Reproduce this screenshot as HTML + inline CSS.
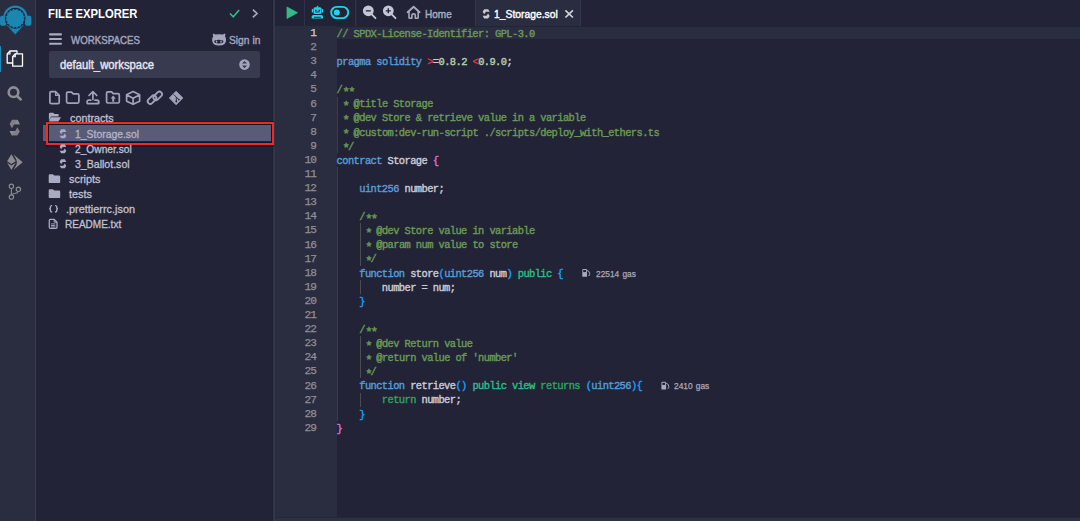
<!DOCTYPE html>
<html><head><meta charset="utf-8">
<style>
*{box-sizing:border-box;margin:0;padding:0}
html,body{width:1080px;height:521px;overflow:hidden;background:#222336;font-family:"Liberation Sans",sans-serif;position:relative}
.abs{position:absolute}
svg{position:absolute;overflow:visible}
.t{position:absolute;white-space:pre;line-height:1;transform-origin:0 0}
.ln{position:absolute;left:275px;width:40.9px;text-align:right;font-family:"Liberation Mono",monospace;font-size:11.2px;letter-spacing:-1.037px;line-height:14.1px;height:14.1px;padding-top:0px;-webkit-text-stroke:0.25px currentColor}
.cl{position:absolute;left:336.6px;font-family:"Liberation Mono",monospace;font-size:10.4px;letter-spacing:-0.578px;color:#c9cad6;line-height:14.1px;height:14.1px;white-space:pre;padding-top:0.9px;-webkit-text-stroke:0.4px currentColor}
.cm{color:#6a9955}
.ast{position:relative;top:2.8px;font-size:13px;letter-spacing:-2.117px}
.kw{color:#569cd6}
.nm{color:#b5cea8}
.rd{color:#dc3a3c}
.ok{color:#32ba89}
.gr{color:#26a562}
.pk{color:#da70d6}
.bl{color:#179fff}
.tree{position:absolute;font-size:11px;color:#c0c1d2;white-space:pre;line-height:1;transform-origin:0 0;-webkit-text-stroke:0.3px currentColor}
</style></head>
<body>
<!-- panels -->
<div class="abs" style="left:0;top:0;width:35px;height:521px;background:#2a2c3f"></div>
<div class="abs" style="left:35px;top:0;width:1px;height:521px;background:#3a3c50"></div>
<div class="abs" style="left:36px;top:0;width:237px;height:521px;background:#222336"></div>
<div class="abs" style="left:272px;top:0;width:1px;height:521px;background:#1f2032"></div>
<div class="abs" style="left:273px;top:0;width:2px;height:521px;background:#33354a"></div>
<div class="abs" style="left:275px;top:0;width:805px;height:26px;background:#222336"></div>
<div class="abs" style="left:275px;top:26px;width:62px;height:491px;background:#2a2c3f"></div>
<div class="abs" style="left:275px;top:517px;width:805px;height:1px;background:#25263a"></div>
<div class="abs" style="left:275px;top:518px;width:805px;height:3px;background:#2e3044"></div>
<!-- line highlight -->
<div class="abs" style="left:337px;top:27.2px;width:743px;height:11.6px;background:#2a2c3f"></div>

<!-- icon panel -->
<svg style="left:0;top:0" width="35" height="40" viewBox="0 0 35 40">
  <path d="M4.5 17.5 A10.9 10.9 0 0 1 26.3 17.5" fill="none" stroke="#1b86b2" stroke-width="2.4"/>
  <rect x="0" y="15.8" width="6.4" height="10" rx="2" fill="#1b86b2"/>
  <rect x="25" y="15.8" width="6.4" height="10" rx="2" fill="#1b86b2"/>
  <path d="M6.6 25 L23.8 25 L15.2 34.5 Z" fill="#1b86b2"/>
  <circle cx="15.2" cy="18.4" r="9.9" fill="#1c3556" stroke="#151a2e" stroke-width="0.8"/>
  <circle cx="15.2" cy="18.4" r="8.6" fill="#1b86b2"/>
  <g fill="#1b86b2"><circle cx="23.73" cy="20.10" r="0.95"/><circle cx="22.43" cy="23.23" r="0.95"/><circle cx="20.03" cy="25.63" r="0.95"/><circle cx="16.90" cy="26.93" r="0.95"/><circle cx="13.50" cy="26.93" r="0.95"/><circle cx="10.37" cy="25.63" r="0.95"/><circle cx="7.97" cy="23.23" r="0.95"/><circle cx="6.67" cy="20.10" r="0.95"/><circle cx="6.67" cy="16.70" r="0.95"/><circle cx="7.97" cy="13.57" r="0.95"/><circle cx="10.37" cy="11.17" r="0.95"/><circle cx="13.50" cy="9.87" r="0.95"/><circle cx="16.90" cy="9.87" r="0.95"/><circle cx="20.03" cy="11.17" r="0.95"/><circle cx="22.43" cy="13.57" r="0.95"/><circle cx="23.73" cy="16.70" r="0.95"/></g>
</svg>
<div class="abs" style="left:0;top:45.5px;width:1.3px;height:26px;background:#1b8cb8"></div>
<svg style="left:0;top:44px" width="35" height="30" viewBox="0 0 35 30">
  <path d="M10 7 L17 7 L17 19 L7.2 19 L7.2 10 Z" fill="none" stroke="#fff" stroke-width="1.3" stroke-linejoin="round"/>
  <path d="M10 7 L10 10 L7.2 10" fill="none" stroke="#fff" stroke-width="1.1"/>
  <path d="M15.3 9.8 L22.5 9.8 L22.5 22.2 L12.7 22.2 L12.7 12.8 Z" fill="#2a2c3f" stroke="#fff" stroke-width="1.3" stroke-linejoin="round"/>
  <path d="M15.3 9.8 L15.3 12.8 L12.7 12.8" fill="none" stroke="#fff" stroke-width="1.1"/>
</svg>
<svg style="left:0;top:80px" width="35" height="30" viewBox="0 0 35 30">
  <circle cx="13.5" cy="12.2" r="4.8" fill="none" stroke="#8d8e92" stroke-width="2.6"/>
  <path d="M17.5 16.5 L20.8 19.5" stroke="#8d8e92" stroke-width="2.5" stroke-linecap="round"/>
</svg>
<svg style="left:0;top:112px" width="35" height="30" viewBox="0 0 35 30">
  <path d="M12 7.8 L17.5 7.8 L19.8 12.3 L14.2 12.3 L12 16.2 L9.6 12 Z" fill="#7e7f87"/>
  <path d="M17.4 23.4 L11.9 23.4 L9.6 19.1 L15.2 19.1 L17.4 15.2 L19.8 19.4 Z" fill="#7e7f87"/>
  <path d="M14.2 12.3 L19.8 12.3 L17.5 7.8 Z" fill="#8b8c92"/>
  <path d="M11.9 23.4 L9.6 19.1 L15.2 19.1 Z" fill="#8b8c92"/>
</svg>
<svg style="left:0;top:148px" width="35" height="28" viewBox="0 0 35 28">
  <path d="M11.4 6.2 L15.7 13.2 L11.4 15.9 L7.1 13.2 Z" fill="#8a8c90"/>
  <path d="M7.1 14.8 L11.4 17.4 L15.7 14.8 L11.4 22 Z" fill="#8a8c90"/>
  <path d="M13.6 6.5 L22.7 14.3 L13.6 21.8 L16.4 17 Q17.5 14 16.2 11.2 Z" fill="#8a8c90"/>
</svg>
<svg style="left:0;top:178px" width="35" height="28" viewBox="0 0 35 28" fill="none" stroke="#8a8c90" stroke-width="1.15">
  <circle cx="11.4" cy="8.3" r="2.2"/>
  <circle cx="11.4" cy="19.1" r="2.2"/>
  <circle cx="18.4" cy="11.3" r="2.2"/>
  <path d="M11.4 10.5 L11.4 16.9 M18.2 13.5 Q17.5 15.3 14.5 15.5 L12 16.2"/>
</svg>

<!-- side panel header -->
<div class="t" style="left:48px;top:6.5px;font-size:13px;font-weight:bold;color:#ffffff;transform:scaleX(0.866)">FILE EXPLORER</div>
<svg style="left:0;top:0" width="273" height="30">
  <path d="M230 13.5 L233.3 16.8 L239.2 10" fill="none" stroke="#2fbf85" stroke-width="1.6"/>
  <path d="M252.9 9.6 L257 13.5 L252.9 17.4" fill="none" stroke="#a7a8bb" stroke-width="1.7"/>
</svg>
<svg style="left:0;top:0" width="273" height="50">
  <rect x="49" y="33.3" width="13" height="2.1" rx="1" fill="#a9aac4"/>
  <rect x="49" y="38" width="13" height="2.1" rx="1" fill="#a9aac4"/>
  <rect x="49" y="42.7" width="13" height="2.1" rx="1" fill="#a9aac4"/>
</svg>
<div class="t" style="left:71px;top:34.5px;font-size:10.8px;color:#a2a3bd;transform:scaleX(0.9);-webkit-text-stroke:0.45px currentColor">WORKSPACES</div>
<svg style="left:0;top:0" width="273" height="50">
  <path d="M213.2 36.2 Q212.3 34.3 213.3 33.5 L215.3 34.6 Q219.1 33.9 222.9 34.6 L224.9 33.5 Q225.9 34.3 225 36.2 Q226.1 38 226.1 40 Q226.1 45.5 219.1 45.5 Q212.1 45.5 212.1 40 Q212.1 38 213.2 36.2 Z" fill="#a4a5bf"/>
  <ellipse cx="218.8" cy="41.6" rx="4.6" ry="1.9" fill="#222336"/>
  <ellipse cx="216.6" cy="41.7" rx="0.8" ry="1.1" fill="#a4a5bf"/>
  <ellipse cx="221" cy="41.7" rx="0.8" ry="1.1" fill="#a4a5bf"/>
</svg>
<div class="t" style="left:228.8px;top:34.5px;font-size:10.8px;color:#a2a3bd;transform:scaleX(0.95);-webkit-text-stroke:0.4px currentColor">Sign in</div>

<div class="abs" style="left:49px;top:51px;width:211px;height:27px;background:#383a50;border-radius:2px"></div>
<div class="t" style="left:59.6px;top:58.5px;font-size:12px;color:#e6e6ee;transform:scaleX(0.94);-webkit-text-stroke:0.4px currentColor">default_workspace</div>
<svg style="left:0;top:0" width="273" height="85">
  <circle cx="244.5" cy="64.6" r="5.3" fill="#a2a3bd"/>
  <path d="M242 63.6 L244.5 61 L247 63.6 Z M242 65.6 L244.5 68.2 L247 65.6 Z" fill="#383a50"/>
</svg>

<!-- file action icons -->
<svg style="left:0;top:0" width="273" height="110" fill="none" stroke="#a2a3bb" stroke-width="1.7" stroke-linejoin="round" stroke-linecap="round">
  <path d="M51.2 91.6 L55.4 91.6 L59.2 95.4 L59.2 102.2 Q59.2 103.7 57.7 103.7 L51.4 103.7 Q49.9 103.7 49.9 102.2 L49.9 93 Q49.9 91.6 51.2 91.6 Z"/>
  <path d="M55.6 91.8 L55.6 95.4 L59 95.4" stroke-width="1.2"/>
  <path d="M67.8 92.2 L71.6 92.2 L73.2 93.9 L77.6 93.9 Q78.9 93.9 78.9 95.2 L78.9 101.8 Q78.9 103.1 77.6 103.1 L67.9 103.1 Q66.6 103.1 66.6 101.8 L66.6 93.5 Q66.6 92.2 67.8 92.2 Z"/>
  <path d="M92.9 99.5 L92.9 91.8 M89 95.5 L92.9 91.6 L96.8 95.5"/>
  <path d="M90.8 100.2 L88.5 100.2 Q87 100.2 87 101.9 Q87 103.7 88.5 103.7 L97.4 103.7 Q98.9 103.7 98.9 101.9 Q98.9 100.2 97.4 100.2 L95 100.2"/>
  <path d="M107.8 91.9 L111.6 91.9 L113.2 93.6 L118 93.6 Q119.3 93.6 119.3 94.9 L119.3 101.7 Q119.3 103 118 103 L107.9 103 Q106.6 103 106.6 101.7 L106.6 93.2 Q106.6 91.9 107.8 91.9 Z"/>
  <path d="M133.1 91.5 L139.6 94.8 L139.6 101.2 L133.1 104.3 L126.6 101.2 L126.6 94.8 Z M126.8 95 L133.1 98.2 L139.4 95 M133.1 98.2 L133.1 104"/>
  <rect x="-5" y="-2.6" width="10" height="5.2" rx="2.6" transform="translate(152 99.6) rotate(-45)" stroke-width="1.8"/>
  <rect x="-5" y="-2.6" width="10" height="5.2" rx="2.6" transform="translate(157.7 95.9) rotate(-45)" stroke-width="1.8"/>
</svg>
<svg style="left:0;top:0" width="273" height="110">
  <path d="M113.2 95.6 L110.6 98.4 L112.2 98.4 L112.2 101.8 L114.2 101.8 L114.2 98.4 L115.8 98.4 Z" fill="#a2a3bb"/>
  <path d="M176.1 91.2 L182.9 98 L176.1 104.8 L169.3 98 Z" fill="#a2a3bb" stroke="#a2a3bb" stroke-width="0.8" stroke-linejoin="round"/>
  <path d="M173.6 94.4 L176.3 97.1 L176.3 101.3 M176.3 97.1 L178.6 99.4" stroke="#222336" stroke-width="0.9" fill="none"/>
  <circle cx="176.3" cy="101.5" r="0.9" fill="#222336"/>
  <circle cx="178.8" cy="99.6" r="0.9" fill="#222336"/>
  <circle cx="97.2" cy="102" r="0.6" fill="#a2a3bb"/>
</svg>

<!-- tree -->
<div class="abs" style="left:43px;top:125px;width:228px;height:16px;background:#595c76"></div>
<div class="abs" style="left:46px;top:121px;width:228px;height:1px;background:#151a32"></div>
<div class="abs" style="left:46px;top:145px;width:228px;height:1.5px;background:#151a32"></div>
<div class="abs" style="left:46px;top:122px;width:228px;height:23px;border:2px solid #f02a1c"></div>
<div class="abs" style="left:48px;top:124px;width:224px;height:19px;border:1px solid #101530"></div>

<svg style="left:0;top:108px" width="273" height="125">
  <!-- folder open -->
  <path d="M48.9 6 Q48.9 4.7 50.2 4.7 L53 4.7 L54.6 6 L58.2 6 Q58.6 6 58.6 6.5 L58.6 8.4 L51 8.4 L48.9 12.5 Z" fill="#a9abc2"/>
  <path d="M50.8 9.2 L61 9.2 L58.4 13.5 L48.9 13.5 Z" fill="#a9abc2"/>
  <!-- sol icons -->
  <path transform="translate(59.6 21.3) scale(0.66 0.58)" d="M2.4 0 L7.9 0 L10.2 4.5 L4.6 4.5 L2.4 8.4 L0 4.2 Z M7.8 15.6 L2.3 15.6 L0 11.3 L5.6 11.3 L7.8 7.4 L10.2 11.6 Z" fill="#a9abc2"/>
  <path transform="translate(59.6 36.3) scale(0.66 0.58)" d="M2.4 0 L7.9 0 L10.2 4.5 L4.6 4.5 L2.4 8.4 L0 4.2 Z M7.8 15.6 L2.3 15.6 L0 11.3 L5.6 11.3 L7.8 7.4 L10.2 11.6 Z" fill="#a9abc2"/>
  <path transform="translate(59.6 51.3) scale(0.66 0.58)" d="M2.4 0 L7.9 0 L10.2 4.5 L4.6 4.5 L2.4 8.4 L0 4.2 Z M7.8 15.6 L2.3 15.6 L0 11.3 L5.6 11.3 L7.8 7.4 L10.2 11.6 Z" fill="#a9abc2"/>
  <!-- folders closed -->
  <path d="M48.7 67.4 Q48.7 66.2 49.9 66.2 L52.8 66.2 L54.3 67.5 L59 67.5 Q60.2 67.5 60.2 68.7 L60.2 73.9 Q60.2 75.1 59 75.1 L49.9 75.1 Q48.7 75.1 48.7 73.9 Z" fill="#a9abc2"/>
  <path d="M48.7 82.4 Q48.7 81.2 49.9 81.2 L52.8 81.2 L54.3 82.5 L59 82.5 Q60.2 82.5 60.2 83.7 L60.2 88.9 Q60.2 90.1 59 90.1 L49.9 90.1 Q48.7 90.1 48.7 88.9 Z" fill="#a9abc2"/>
  <!-- {} -->
  <path d="M51.6 97.6 Q50.4 97.8 50.4 99 L50.4 99.9 Q50.4 100.7 49.2 100.7 Q50.4 100.7 50.4 101.5 L50.4 102.6 Q50.4 103.8 51.6 104 M55.6 97.6 Q56.8 97.8 56.8 99 L56.8 99.9 Q56.8 100.7 58 100.7 Q56.8 100.7 56.8 101.5 L56.8 102.6 Q56.8 103.8 55.6 104" fill="none" stroke="#a9abc2" stroke-width="1.4" stroke-linecap="round"/>
  <!-- readme -->
  <path d="M50.3 111.4 L54.2 111.4 L57 114.2 L57 119.3 Q57 120.3 56 120.3 L50.3 120.3 Q49.3 120.3 49.3 119.3 L49.3 112.4 Q49.3 111.4 50.3 111.4 Z" fill="none" stroke="#a9abc2" stroke-width="1.3" stroke-linejoin="round"/>
  <path d="M54.2 111.6 L54.2 114.2 L56.8 114.2" fill="none" stroke="#a9abc2" stroke-width="1"/>
  <path d="M51 115.9 L55.3 115.9 M51 117.5 L55.3 117.5 M51 119 L55.3 119" stroke="#a9abc2" stroke-width="0.9"/>
</svg>
<div class="tree" style="left:69.8px;top:113px;transform:scaleX(0.98)">contracts</div>
<div class="tree" style="left:74.6px;top:129px;color:#b4b5c8;transform:scaleX(0.945)">1_Storage.sol</div>
<div class="tree" style="left:74.6px;top:144px;transform:scaleX(0.927)">2_Owner.sol</div>
<div class="tree" style="left:74.6px;top:159px;transform:scaleX(0.96)">3_Ballot.sol</div>
<div class="tree" style="left:68.9px;top:174px;transform:scaleX(0.99)">scripts</div>
<div class="tree" style="left:68.9px;top:189px;transform:scaleX(0.99)">tests</div>
<div class="tree" style="left:65.5px;top:204px;transform:scaleX(0.99)">.prettierrc.json</div>
<div class="tree" style="left:64.9px;top:219px;transform:scaleX(0.91)">README.txt</div>

<!-- tab bar -->
<svg style="left:0;top:0" width="1080" height="26">
  <path d="M287 7 L297.5 12.7 L287 18.5 Z" fill="#35b888" stroke="#35b888" stroke-width="0.8" stroke-linejoin="round"/>
  <rect x="304" y="0" width="1" height="26" fill="#2f3145"/>
  <rect x="355" y="0" width="1.5" height="26" fill="#2f3145"/>
  <g fill="#22d3ee">
    <rect x="313.5" y="7.3" width="8" height="6.6" rx="1.5"/>
    <rect x="316.8" y="5.8" width="1.4" height="2"/>
    <rect x="311.8" y="9" width="1.3" height="3.5"/>
    <rect x="321.9" y="9" width="1.3" height="3.5"/>
    <path d="M311.7 18.6 L311.7 16.5 Q311.7 15 313.5 15 L321.3 15 Q323 15 323 16.5 L323 18.6 Z"/>
  </g>
  <g fill="#1d2238">
    <rect x="315" y="9.8" width="1.6" height="1.5"/>
    <rect x="318.5" y="9.8" width="1.6" height="1.5"/>
    <rect x="315.5" y="11.6" width="4" height="0.8"/>
    <rect x="314" y="16.8" width="6.8" height="1"/>
  </g>
  <rect x="331.2" y="6.9" width="17" height="11.2" rx="5.6" fill="none" stroke="#22d3ee" stroke-width="1.9"/>
  <circle cx="336.8" cy="12.5" r="3" fill="#22d3ee"/>
  <!-- zoom -->
  <circle cx="368.3" cy="10.8" r="5.4" fill="#c5c6d6"/>
  <path d="M372 14.6 L375.5 18.2" stroke="#c5c6d6" stroke-width="1.8" stroke-linecap="round"/>
  <rect x="365.8" y="10.2" width="5" height="1.3" fill="#222336"/>
  <circle cx="388.3" cy="10.8" r="5.4" fill="#c5c6d6"/>
  <path d="M392 14.6 L395.5 18.2" stroke="#c5c6d6" stroke-width="1.8" stroke-linecap="round"/>
  <path d="M385.8 10.8 L390.8 10.8 M388.3 8.3 L388.3 13.3" stroke="#222336" stroke-width="1.3"/>
  <!-- home -->
  <path d="M407.6 12.2 L413.6 6.8 L419.6 12.2" fill="none" stroke="#a9aabb" stroke-width="1.9" stroke-linejoin="round" stroke-linecap="round"/>
  <path d="M409 11.2 L409 17.6 Q409 18.3 409.7 18.3 L411.9 18.3 L411.9 15 Q411.9 13.9 413.6 13.9 Q415.3 13.9 415.3 15 L415.3 18.3 L417.5 18.3 Q418.2 18.3 418.2 17.6 L418.2 11.2" fill="none" stroke="#a9aabb" stroke-width="1.6" stroke-linejoin="round"/>
  <!-- active tab -->
  <rect x="475" y="0" width="106" height="26" fill="#2a2c3f"/>
  <rect x="475" y="0" width="1" height="26" fill="#34364b"/>
  <rect x="580" y="0" width="1" height="26" fill="#34364b"/>
  <path transform="translate(482.6 9.2) scale(0.7 0.59)" d="M2.4 0 L7.9 0 L10.2 4.5 L4.6 4.5 L2.4 8.4 L0 4.2 Z M7.8 15.6 L2.3 15.6 L0 11.3 L5.6 11.3 L7.8 7.4 L10.2 11.6 Z" fill="#c7c8d6"/>
  <path d="M565.4 10.3 L572.9 17.5 M572.9 10.3 L565.4 17.5" stroke="#d0d1dc" stroke-width="1.7"/>
</svg>
<div class="t" style="left:425px;top:9px;font-size:11px;color:#a9aabb;transform:scaleX(0.91);-webkit-text-stroke:0.45px currentColor">Home</div>
<div class="t" style="left:494px;top:9px;font-size:11px;color:#ffffff;transform:scaleX(0.94);-webkit-text-stroke:0.4px currentColor">1_Storage.sol</div>

<!-- editor lines -->
<div class="ln" style="top:26.00px;color:#d0d0d8">1</div>
<div class="cl" style="top:26.00px"><span class="cm">// SPDX-License-Identifier: GPL-3.0</span></div>
<div class="ln" style="top:40.10px;color:#8f8f97">2</div>
<div class="ln" style="top:54.20px;color:#8f8f97">3</div>
<div class="cl" style="top:54.20px"><span class="kw">pragma</span> <span class="kw">solidity</span> <span class="rd">&gt;</span>=<span class="nm">0.8.2</span> <span class="rd">&lt;</span><span class="nm">0.9.0</span>;</div>
<div class="ln" style="top:68.30px;color:#8f8f97">4</div>
<div class="ln" style="top:82.40px;color:#8f8f97">5</div>
<div class="cl" style="top:82.40px"><span class="cm">/<span class="ast">*</span><span class="ast">*</span></span></div>
<div class="ln" style="top:96.50px;color:#8f8f97">6</div>
<div class="cl" style="top:96.50px"><span class="cm"> <span class="ast">*</span> @title Storage</span></div>
<div class="ln" style="top:110.60px;color:#8f8f97">7</div>
<div class="cl" style="top:110.60px"><span class="cm"> <span class="ast">*</span> @dev Store &amp; retrieve value in a variable</span></div>
<div class="ln" style="top:124.70px;color:#8f8f97">8</div>
<div class="cl" style="top:124.70px"><span class="cm"> <span class="ast">*</span> @custom:dev-run-script ./scripts/deploy_with_ethers.ts</span></div>
<div class="ln" style="top:138.80px;color:#8f8f97">9</div>
<div class="cl" style="top:138.80px"><span class="cm"> <span class="ast">*</span>/</span></div>
<div class="ln" style="top:152.90px;color:#8f8f97">10</div>
<div class="cl" style="top:152.90px"><span class="kw">contract</span> Storage <span class="pk">{</span></div>
<div class="ln" style="top:167.00px;color:#8f8f97">11</div>
<div class="ln" style="top:181.10px;color:#8f8f97">12</div>
<div class="cl" style="top:181.10px">    <span class="kw">uint256</span> number;</div>
<div class="ln" style="top:195.20px;color:#8f8f97">13</div>
<div class="ln" style="top:209.30px;color:#8f8f97">14</div>
<div class="cl" style="top:209.30px">    <span class="cm">/<span class="ast">*</span><span class="ast">*</span></span></div>
<div class="ln" style="top:223.40px;color:#8f8f97">15</div>
<div class="cl" style="top:223.40px">    <span class="cm"> <span class="ast">*</span> @dev Store value in variable</span></div>
<div class="ln" style="top:237.50px;color:#8f8f97">16</div>
<div class="cl" style="top:237.50px">    <span class="cm"> <span class="ast">*</span> @param num value to store</span></div>
<div class="ln" style="top:251.60px;color:#8f8f97">17</div>
<div class="cl" style="top:251.60px">    <span class="cm"> <span class="ast">*</span>/</span></div>
<div class="ln" style="top:265.70px;color:#8f8f97">18</div>
<div class="cl" style="top:265.70px">    <span class="kw">function</span> store<span class="bl">(</span><span class="kw">uint256</span> num<span class="bl">)</span> <span class="ok">public</span> <span class="bl">{</span></div>
<div class="ln" style="top:279.80px;color:#8f8f97">19</div>
<div class="cl" style="top:279.80px">        number = num;</div>
<div class="ln" style="top:293.90px;color:#8f8f97">20</div>
<div class="cl" style="top:293.90px">    <span class="bl">}</span></div>
<div class="ln" style="top:308.00px;color:#8f8f97">21</div>
<div class="ln" style="top:322.10px;color:#8f8f97">22</div>
<div class="cl" style="top:322.10px">    <span class="cm">/<span class="ast">*</span><span class="ast">*</span></span></div>
<div class="ln" style="top:336.20px;color:#8f8f97">23</div>
<div class="cl" style="top:336.20px">    <span class="cm"> <span class="ast">*</span> @dev Return value</span></div>
<div class="ln" style="top:350.30px;color:#8f8f97">24</div>
<div class="cl" style="top:350.30px">    <span class="cm"> <span class="ast">*</span> @return value of &#x27;number&#x27;</span></div>
<div class="ln" style="top:364.40px;color:#8f8f97">25</div>
<div class="cl" style="top:364.40px">    <span class="cm"> <span class="ast">*</span>/</span></div>
<div class="ln" style="top:378.50px;color:#8f8f97">26</div>
<div class="cl" style="top:378.50px">    <span class="kw">function</span> retrieve<span class="bl">()</span> <span class="ok">public</span> <span class="ok">view</span> <span class="gr">returns</span> <span class="bl">(</span><span class="kw">uint256</span><span class="bl">)</span><span class="bl">{</span></div>
<div class="ln" style="top:392.60px;color:#8f8f97">27</div>
<div class="cl" style="top:392.60px">        <span class="gr">return</span> number;</div>
<div class="ln" style="top:406.70px;color:#8f8f97">28</div>
<div class="cl" style="top:406.70px">    <span class="bl">}</span></div>
<div class="ln" style="top:420.80px;color:#8f8f97">29</div>
<div class="cl" style="top:420.80px"><span class="pk">}</span></div>

<!-- gas annotations -->
<svg style="left:0;top:0" width="1080" height="521">
  <path d="M661.4 382.8 Q661.4 381.8 662.4 381.8 L665.1 381.8 Q666.1 381.8 666.1 382.8 L666.1 389.6 L661.4 389.6 Z" fill="#a9aabb"/>
  <rect x="662.3" y="382.8" width="2.9" height="2.1" fill="#222336"/>
  <path d="M666.1 383.3 Q668.6999999999999 383.8 668.6999999999999 386.1 L668.6999999999999 387.6 Q668.6999999999999 388.6 667.6 388.3" fill="none" stroke="#a9aabb" stroke-width="1"/>
  <path d="M582.3 270 Q582.3 269 583.3 269 L586.0 269 Q587.0 269 587.0 270 L587.0 276.8 L582.3 276.8 Z" fill="#a9aabb"/>
  <rect x="583.1999999999999" y="270" width="2.9" height="2.1" fill="#222336"/>
  <path d="M587.0 270.5 Q589.5999999999999 271 589.5999999999999 273.3 L589.5999999999999 274.8 Q589.5999999999999 275.8 588.5 275.5" fill="none" stroke="#a9aabb" stroke-width="1"/>
</svg>
<div class="t" style="left:595.5px;top:270px;font-size:8.5px;color:#a9aabb;transform:scaleX(0.98);-webkit-text-stroke:0.25px currentColor;word-spacing:1px">22514 gas</div>
<div class="t" style="left:674px;top:382.2px;font-size:8.5px;color:#a9aabb;transform:scaleX(0.98);-webkit-text-stroke:0.25px currentColor;word-spacing:1px">2410 gas</div>

<!-- indent guides -->
<div class="abs" style="left:337px;top:96.50px;width:1px;height:56.40px;background:#3a3c47"></div>

<div class="abs" style="left:337px;top:167.00px;width:1px;height:253.80px;background:#3a3c47"></div>
<div class="abs" style="left:359.8px;top:223.40px;width:1px;height:42.30px;background:#4a4d52"></div>
<div class="abs" style="left:359.8px;top:279.80px;width:1px;height:14.10px;background:#4a4d52"></div>
<div class="abs" style="left:359.8px;top:336.20px;width:1px;height:42.30px;background:#4a4d52"></div>
<div class="abs" style="left:359.8px;top:392.60px;width:1px;height:14.10px;background:#4a4d52"></div>

</body></html>
